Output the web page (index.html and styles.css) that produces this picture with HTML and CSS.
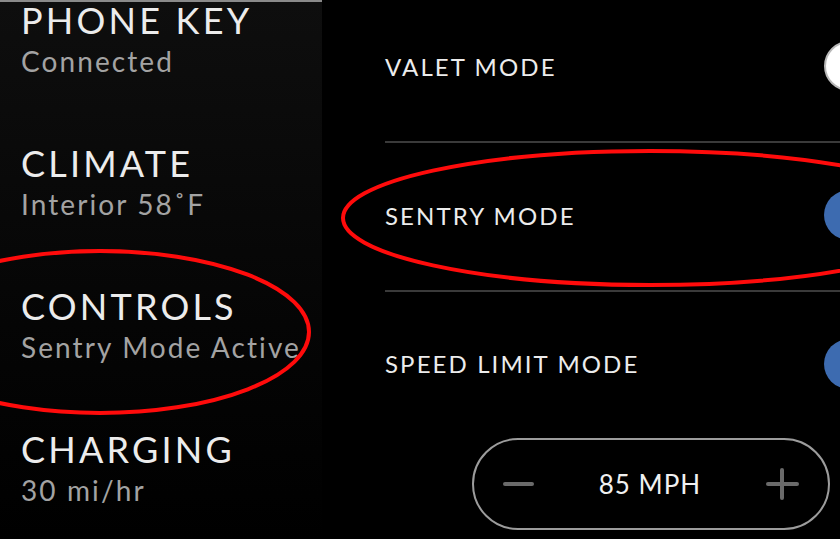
FILE: index.html
```html
<!DOCTYPE html>
<html lang="en">
<head>
    <meta charset="UTF-8">
    <title>Controls</title>
    <link rel="stylesheet" href="styles.css">
</head>
<body>
    <div class="screen">
        <div class="sidebar">
            <div class="menu-item">
                <div class="menu-title">PHONE KEY</div>
                <div class="menu-sub">Connected</div>
            </div>
            <div class="menu-item">
                <div class="menu-title">CLIMATE</div>
                <div class="menu-sub">Interior 58˚F</div>
            </div>
            <div class="menu-item">
                <div class="menu-title">CONTROLS</div>
                <div class="menu-sub">Sentry Mode Active</div>
            </div>
            <div class="menu-item">
                <div class="menu-title">CHARGING</div>
                <div class="menu-sub">30 mi/hr</div>
            </div>
        </div>
        <div class="settings">
            <div class="setting-row first">
                <span class="setting-label">VALET MODE</span>
                <span class="toggle off"></span>
            </div>
            <div class="setting-row">
                <span class="setting-label">SENTRY MODE</span>
                <span class="toggle on"></span>
            </div>
            <div class="setting-row last">
                <span class="setting-label">SPEED LIMIT MODE</span>
                <span class="toggle on"></span>
            </div>
            <div class="speed-control">
                <span class="minus"></span>
                <span class="speed-value">85 MPH</span>
                <span class="plus"></span>
            </div>
        </div>
        <!-- red marker circles drawn over the screenshot -->
        <svg class="markup" width="840" height="539" viewBox="0 0 840 539">
            <ellipse cx="650" cy="218" rx="307" ry="67" fill="none" stroke="#ff0b0b" stroke-width="4"/>
            <ellipse cx="100" cy="332" rx="209" ry="81" fill="none" stroke="#ff0b0b" stroke-width="4"/>
        </svg>
    </div>
</body>
</html>
```

FILE: styles.css
```css
body {
    margin: 0;
    background-color: #000;
    font-family: 'Lato', sans-serif;
    overflow: hidden;
}
.screen {
    position: relative;
    display: flex;
    width: 840px;
    height: 539px;
    overflow: hidden;
}
.sidebar {
    width: 322px;
    flex-shrink: 0;
    border-top: 2px solid #8a8a8a;
    background: linear-gradient(#0e0e0e, #050505 60%, #000);
    box-sizing: border-box;
}
.menu-item {
    height: 143px;
    padding-left: 21px;
}
.menu-title {
    font-size: 36px;
    line-height: 36px;
    color: #ececec;
    letter-spacing: 3.2px;
}
.menu-sub {
    margin-top: 6px;
    font-size: 28px;
    line-height: 34px;
    color: #a3a3a3;
    letter-spacing: 2.1px;
    white-space: nowrap;
}
.settings {
    flex: 1;
    padding-left: 63px;
    margin-top: -6px;
}
.setting-row {
    display: flex;
    align-items: center;
    justify-content: space-between;
    height: 147px;
    border-bottom: 2px solid #3a3a3a;
    box-sizing: border-box;
    height: 149px;
    padding-bottom: 3px;
}
.setting-row.last {
    height: 146px;
    border-bottom: none;
}
.setting-label {
    font-size: 24px;
    color: #ececec;
    letter-spacing: 2.1px;
}
.toggle {
    width: 50px;
    height: 50px;
    border-radius: 50%;
    margin-right: -34px;
    box-sizing: border-box;
}
.toggle.off {
    background-color: #fff;
    border: 2px solid #b9b9b9;
}
.toggle.on {
    background-color: #3d6bb0;
}
.speed-control {
    display: flex;
    align-items: center;
    justify-content: space-between;
    width: 358px;
    height: 92px;
    margin-left: 87px;
    padding: 0 29px;
    border: 2px solid #9c9c9c;
    border-radius: 46px;
    box-sizing: border-box;
}
.speed-value {
    font-size: 26px;
    color: #f0f0f0;
    letter-spacing: 1px;
}
.minus {
    width: 31px;
    height: 4px;
    border-radius: 2px;
    background-color: #6a6a6a;
}
.plus {
    position: relative;
    width: 33px;
    height: 4px;
    border-radius: 2px;
    background-color: #6a6a6a;
}
.plus::after {
    content: "";
    position: absolute;
    left: 14.5px;
    top: -14px;
    width: 4px;
    height: 32px;
    border-radius: 2px;
    background-color: #6a6a6a;
}
.markup {
    position: absolute;
    left: 0;
    top: 0;
    pointer-events: none;
}
```
